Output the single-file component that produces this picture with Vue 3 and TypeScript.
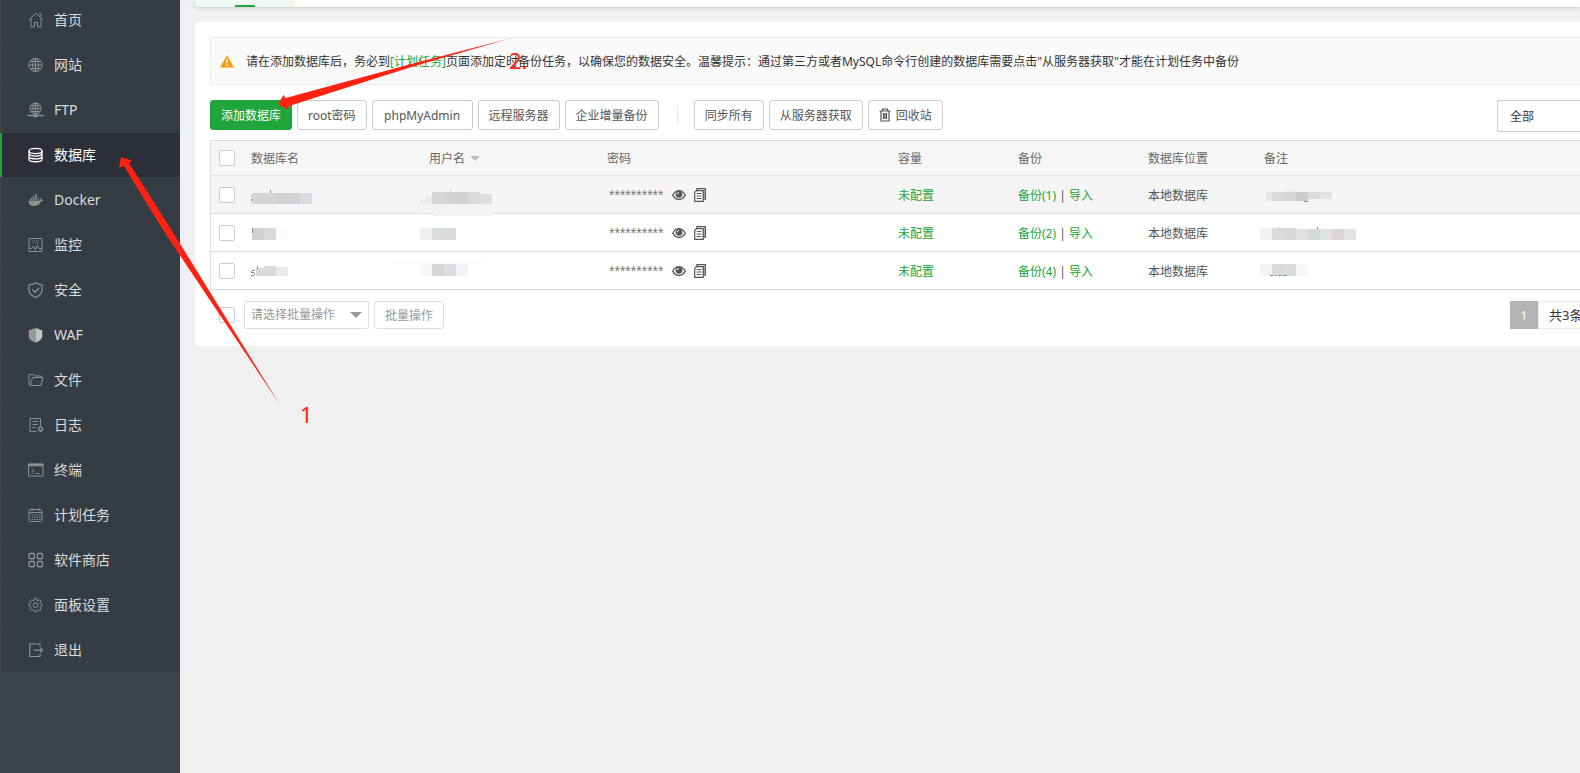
<script setup lang="ts">
import { ref } from 'vue'

interface MenuItem { label: string; icon: string }
interface Block { x: number; y: number; w: number; h: number; c: string }
interface Mosaic { blocks: Block[]; peek?: string }
interface Row { id: number; backups: number; name: Mosaic; user: Mosaic; note: Mosaic }

const menu: MenuItem[] = [
  { label: '首页', icon: '<path d="M.8 8 8 1.2 15.2 8M3 6.5v8.3h3.5v-4.5h3v4.5H13V6.5M11 1.8h2v2.5"/>' },
  { label: '网站', icon: '<circle cx="7.5" cy="8" r="6.6"/><ellipse cx="7.5" cy="8" rx="3" ry="6.6"/><path d="M1 8h13M7.5 1.4v13.2M2 4.5h11M2 11.5h11"/>' },
  { label: 'FTP', icon: '<circle cx="7.5" cy="6.6" r="5.6"/><ellipse cx="7.5" cy="6.6" rx="2.6" ry="5.6"/><path d="M2 6.6h11M7.5 1v11M3 3.8h9M3 9.5h9"/><path d="M-.5 13.5h16M5.5 13.5h4" stroke-width="1.6"/><path d="M5.5 14.2h4" stroke-width="2"/>' },
  { label: '数据库', icon: '<g stroke-width="1.3"><ellipse cx="7.500" cy="4" rx="6.500" ry="2.600"/><path d="M1 4v8.200c0 3.400 13 3.400 13 0V4M1 6.800c1.500 3 11.500 3 13 0M1 9.600c1.500 3 11.500 3 13 0"/></g>' },
  { label: 'Docker', icon: '<path d="M.5 8.500h10.800c1 0 1.200-1.200.7-2.500 1 .3 1.500 1 1.600 1.700.7-.1 1.300.1 1.700.4-.5 1-1.500 1.300-2.500 1.300C11.500 12.800 9 14 6 14 2.500 14 .5 12 .5 8.500z" fill="currentColor" stroke="none"/><path d="M2 7h2M4.500 7h2M7 7h2M9.500 7h1.500M4.500 5h2M7 5h2M7 3h2" stroke-width="1.600"/>' },
  { label: '监控', icon: '<path d="M1 1.500h13v13H1z"/><path d="M4 4h7M4 6h7" stroke-opacity=".5"/><path d="M1.500 11.500l2.500-.5 1.500-2 2 4 2-5 1.500 3.500h3"/>' },
  { label: '安全', icon: '<path d="M7.500.8C5.500 2.200 3.500 2.700 1 2.800v6c0 3.200 3 5 6.500 6.700C11 13.800 14 12 14 8.800v-6c-2.500-.1-4.500-.6-6.500-2zM4.300 7.500l2.700 2.700 4.200-4.400" stroke-width="1.300"/>' },
  { label: 'WAF', icon: '<path d="M7.500.2 6 2 4.500 1.500 3 3 .8 3v6.500c0 2.500 3 4.500 6.700 6.300z" fill="#999" stroke="none"/><path d="M7.500.2 9 2l1.500-.5L12 3l2.200 0v6.500c0 2.500-3 4.500-6.700 6.300z" fill="#c4c4c4" stroke="none"/>' },
  { label: '文件', icon: '<path d="M2.200 13.500H13L15 5.500H4.500L2.200 13.500 1 12.500v-10h4.500L7 4h6v1.500"/>' },
  { label: '日志', icon: '<path d="M8.500 14.500H2v-13h10.500v7M4.500 4.500H10M4.500 7.500H10M4.500 10.500h3"/><circle cx="12.500" cy="12" r="2" stroke-width="1.500"/><path d="M12.500 9v1M12.500 14v1"/>' },
  { label: '终端', icon: '<path d="M.5 2h14.500v12H.5zM3.500 7l2.500 2-2.500 2M7.500 11.500h4"/><path d="M.5 3h14.500" stroke-width="2.500"/>' },
  { label: '计划任务', icon: '<rect x="1" y="2.500" width="13" height="12" rx="1.500"/><path d="M1 5.500h13M4 1v3M11 1v3"/><path d="M3.500 8h9M3.500 10.300h9M3.500 12.500h9" stroke-dasharray="1.500 1"/>' },
  { label: '软件商店', icon: '<g stroke-width="1.400"><rect x="1" y="1.500" width="5.200" height="5.200" rx="1"/><rect x="9.300" y="1.500" width="5.200" height="5.200" rx="1"/><rect x="1" y="9.500" width="5.200" height="5.200" rx="1"/><rect x="9.300" y="9.500" width="5.200" height="5.200" rx="1"/></g>' },
  { label: '面板设置', icon: '<path d="M6.500 1.500h2l.4 1.700 1.200.5 1.500-1 1.400 1.400-1 1.500.5 1.200 1.700.4v2l-1.700.4-.5 1.200 1 1.500-1.400 1.400-1.500-1-1.200.5-.4 1.700h-2l-.4-1.700-1.200-.5-1.500 1L2 12.300l1-1.500-.5-1.200L.8 9.200v-2l1.700-.4.500-1.200-1-1.500 1.400-1.400 1.500 1 1.200-.5z"/><circle cx="7.500" cy="8.200" r="2.300"/>' },
  { label: '退出', icon: '<path d="M12 4.500v-2.500H1.800v12.500H12V12M6 8.200h8.500M12 5.700l2.500 2.500L12 10.700" stroke-width="1.200"/>' },
]
const active = ref('数据库')

function strip(x: number, y: number, h: number, colors: string[]): Block[] {
  return colors.map((c, i) => ({ x: x + i * 12, y, w: 12, h, c }))
}

const rows: Row[] = [
  {
    id: 1, backups: 1,
    name: { blocks: strip(9, 17, 11, ['#d3d4d6', '#d5d4d2', '#cfd0d2', '#d1d2d5', '#dbdce0']), peek: 'M8.500 19.500v1M8.500 22.500v2M27.500 14v3' },
    user: { blocks: [{ x: 2, y: 28, w: 69, h: 6, c: '#f3f3f3' }, { x: 12, y: 34, w: 59, h: 6, c: '#f3f3f3' }, { x: -1, y: 24, w: 8, h: 4, c: '#ececec' }, { x: 5, y: 20, w: 7, h: 8, c: '#ebebeb' }, ...strip(11, 16, 12, ['#d6d6d6', '#d2d4d3', '#d1d1d2', '#d9d9db']), { x: 59, y: 18, w: 12, h: 10, c: '#dfdfe2' }], peek: 'M29 14v1' },
    note: { blocks: [{ x: 10, y: 16, w: 6, h: 9, c: '#e8e8e8' }, { x: 28, y: 13, w: 12, h: 3, c: '#f0f0f0' }, ...strip(16, 16, 9, ['#d9d9d9', '#d6d6d6', '#cfcdcb']), ...strip(52, 16, 7, ['#d9dddd', '#e2e3e5'])], peek: 'M48 25.500h4' },
  },
  {
    id: 2, backups: 2,
    name: { blocks: strip(9, 14, 12, ['#d0d0d2', '#d9dadb', '#fafcfe']), peek: 'M9.500 13.500v5' },
    user: { blocks: strip(-1, 14, 12, ['#efefef', '#d9dddb', '#dadcdc']) },
    note: { blocks: [...strip(4, 14, 12, ['#f2f0f1', '#dbdbdb', '#dad8d6']), ...strip(40, 15, 11, ['#e0e1e2', '#d8d7d9', '#dee2e0', '#d9d6d4', '#e2e3e6'])], peek: 'M22.500 13v1M61.500 13v2' },
  },
  {
    id: 3, backups: 4,
    name: { blocks: [{ x: 13, y: 16, w: 8, h: 8, c: '#d9d9da' }, { x: 21, y: 14, w: 12, h: 10, c: '#dadada' }, { x: 33, y: 15, w: 12, h: 9, c: '#e8e9eb' }], peek: 'M9 18.500h3M8.500 19v1.500M9 20.500h2M11.500 21v2M8 23.500h3M14.500 14v3' },
    user: { blocks: [{ x: -28, y: 7, w: 92, h: 5, c: '#fbfbfb' }, ...strip(-1, 12, 12, ['#f7f5f5', '#d6d6d6', '#dcdddd', '#f2f3f7'])] },
    note: { blocks: strip(4, 12, 12, ['#f4f4f3', '#dadada', '#d8dcda', '#f5f6f9']), peek: 'M14 23.500h3M19 23.500h1M22 23.500h3M27 23.500h4' },
  },
]
const checked = ref<number[]>([])
const scope = ref('all')
const batch = ref('')
</script>

<template>
  <div class="page">
    <nav class="side">
      <ul class="menu">
        <li v-for="m in menu" :key="m.label" :class="{ active: m.label === active }">
          <a href="#" @click.prevent="active = m.label">
            <svg class="mi" viewBox="0 0 16 16" aria-hidden="true" v-html="m.icon"></svg>
            <span>{{ m.label }}</span>
          </a>
        </li>
      </ul>
    </nav>

    <main class="main">
      <div class="tabs"><div class="tab"></div></div>
      <section class="card">
        <div class="notice">
          <svg class="warn" viewBox="0 0 14 13" aria-hidden="true"><path d="M7 .3 14 12.500H0z" fill="#f39c12" /><path d="M7 4.200v4M7 9.500v1.500" stroke="#fff" stroke-width="1.600" /></svg>
          <p>请在添加数据库后，务必到<a href="#">[计划任务]</a>页面添加定时备份任务，以确保您的数据安全。温馨提示：通过第三方或者MySQL命令行创建的数据库需要点击"从服务器获取"才能在计划任务中备份</p>
        </div>

        <div class="toolbar">
          <button class="btn primary">添加数据库</button>
          <button class="btn">root密码</button>
          <button class="btn wide">phpMyAdmin</button>
          <button class="btn">远程服务器</button>
          <button class="btn">企业增量备份</button>
          <span class="split"></span>
          <button class="btn">同步所有</button>
          <button class="btn">从服务器获取</button>
          <button class="btn">
            <svg class="trash" viewBox="0 0 12 14" aria-hidden="true"><path d="M.5 3h11M3.500 3V1h5v2M2 3v10h8V3M4.500 5v6M6 5v6M7.500 5v6" fill="none" stroke="#555" stroke-width="1.200" /></svg>回收站
          </button>
          <select v-model="scope" class="scope" aria-label="数据库位置">
            <option value="all">全部</option>
          </select>
        </div>

        <table class="grid">
          <colgroup><col class="c1"><col class="c2"><col class="c2"><col class="c3"><col class="c4"><col class="c5"><col class="c6"><col></colgroup>
          <thead>
            <tr>
              <th class="tick"><input type="checkbox" aria-label="全选"></th>
              <th>数据库名</th>
              <th>用户名<svg class="sort" viewBox="0 0 10 5" aria-hidden="true"><path d="M0 0h10L5 5z" fill="#bbb" /></svg></th>
              <th>密码</th>
              <th>容量</th>
              <th>备份</th>
              <th>数据库位置</th>
              <th>备注</th>
            </tr>
          </thead>
          <tbody>
            <tr v-for="r in rows" :key="r.id" :class="{ hover: r.id === 1 }">
              <td class="tick"><input v-model="checked" type="checkbox" :value="r.id" aria-label="选择"></td>
              <td v-for="(m, k) in [r.name, r.user]" :key="k" class="masked">
                <svg class="mosaic" viewBox="0 0 110 37" aria-hidden="true">
                  <rect v-for="(b, i) in m.blocks" :key="i" :x="b.x" :y="b.y" :width="b.w" :height="b.h" :fill="b.c" />
                  <path v-if="m.peek" :d="m.peek" fill="none" stroke="#889" />
                </svg>
              </td>
              <td class="tick">
                <div class="pwd">
                  <span>**********</span>
                  <button class="ico" aria-label="显示密码">
                    <svg viewBox="0 0 14 12" width="14" height="12"><path d="M.7 6.200C2.500 3 4.500 1.700 7 1.700s4.500 1.300 6.300 4.500C11.500 9.300 9.500 10.500 7 10.500S2.500 9.300.7 6.200z" fill="none" stroke="#555" stroke-width="1.300" /><circle cx="7" cy="5.300" r="3.400" fill="#555" /><path d="M5.200 5.300A1.800 1.800 0 0 1 7 3.500" stroke="#fff" fill="none" /></svg>
                  </button>
                  <button class="ico copy" aria-label="复制密码">
                    <svg viewBox="0 0 12 14" width="12" height="14"><path d="M3 2.500V.7h8.300v10.500H9.500" fill="none" stroke="#555" stroke-width="1.300" /><path d="M9.500 2.500v9" stroke="#888" stroke-width="2" /><path d="M2.500 2.700h6.700v10.600H.7V4.500z" fill="#fff" stroke="#555" stroke-width="1.200" /><path d="M2.700 5.500h4.600M2.700 8h4.600M2.700 10.500h4.600" stroke="#555" /></svg>
                  </button>
                </div>
              </td>
              <td><a href="#">未配置</a></td>
              <td><a href="#">备份({{ r.backups }})</a> | <a href="#">导入</a></td>
              <td>本地数据库</td>
              <td class="masked">
                <svg class="mosaic" viewBox="0 0 110 37" aria-hidden="true">
                  <rect v-for="(b, i) in r.note.blocks" :key="i" :x="b.x" :y="b.y" :width="b.w" :height="b.h" :fill="b.c" />
                  <path v-if="r.note.peek" :d="r.note.peek" fill="none" stroke="#889" />
                </svg>
              </td>
            </tr>
          </tbody>
        </table>

        <div class="foot">
          <input type="checkbox" aria-label="全选">
          <div class="batch">
            <select v-model="batch" aria-label="批量操作">
              <option value="">请选择批量操作</option>
            </select>
            <svg viewBox="0 0 12 6" aria-hidden="true"><path d="M0 0h12L6 6z" fill="#999" /></svg>
          </div>
          <button class="btn faint">批量操作</button>
          <div class="pager"><span class="cur">1</span><span class="total">共3条</span></div>
        </div>
      </section>
    </main>

    <svg class="marks" aria-hidden="true">
      <path d="M121 157 132 160.500 129 163 171.500 230 280 405 163 230 124 166 119 168z" />
      <path d="M278 104 283.500 95 285.500 98 413 63.500 512 38 413 66.500 289 106 287 109.500z" />
      <text x="509" y="69">2.</text>
      <text x="300" y="423">1</text>
    </svg>
  </div>
</template>

<style>
body { margin: 0; background: #f0f0f0; }
</style>

<style scoped>
.page { position: relative; display: flex; min-height: 100vh; overflow: hidden; font: 12px/18px "Noto Sans", "Noto Sans CJK SC", sans-serif; color: #555; }
.page *, .page *::before { box-sizing: border-box; }
a { color: #20a53a; text-decoration: none; }
button, select, input { font: inherit; margin: 0; }
.side { flex: 0 0 180px; background: #3d434d; }
.menu { list-style: none; margin: -2px 0 0; padding: 0; display: flex; flex-direction: column; gap: 1px; background: #353c43; }
.menu li { height: 44px; border-left: 2px solid #433f3e; }
.menu li.active { background: #2c2f37; border-left-color: #20a53a; }
.menu a { display: flex; align-items: center; gap: 10px; height: 100%; padding-left: 26px; font-size: 14px; line-height: 20px; color: #ddd; }
.menu .active a { color: #fff; }
.mi { width: 16px; height: 16px; color: #8e9092; fill: none; stroke: currentColor; overflow: visible; }
.active .mi { color: #fff; }

.main { flex: 1; min-width: 0; padding-left: 15px; }
.tabs { height: 7px; background: #fff; border-bottom-left-radius: 4px; box-shadow: 0 1px 4px rgba(0, 0, 0, .18); }
.tab { width: 100px; height: 7px; background: #f0f9f2; border-bottom-left-radius: 4px; display: flex; align-items: flex-end; justify-content: center; }
.tab::after { content: ""; width: 20px; height: 2px; background: #20a53a; }
.card { margin-top: 15px; padding: 15px 0 17px 15px; background: #fff; border-radius: 4px 0 0 4px; }
.notice { display: flex; align-items: center; gap: 12px; height: 48px; padding-left: 9px; border: 1px solid #ebebeb; border-right: 0; background: #fafafa; color: #333; border-radius: 2px 0 0 2px; }
.notice p { margin: 0; padding-top: 2px; white-space: nowrap; }
.warn { width: 14px; height: 13px; flex: none; }

.toolbar { display: flex; gap: 5px; align-items: flex-start; margin-top: 15px; height: 40px; }
.btn { display: inline-flex; align-items: center; justify-content: center; height: 30px; padding: 2px 10px 0; border: 1px solid #ccc; border-radius: 3px; background: #fff; color: #555; white-space: nowrap; }
.btn.primary { background: #20a53a; border-color: #20a53a; color: #fff; }
.btn.wide { min-width: 101px; }
.split { width: 1px; height: 16px; margin: 7px 11px 0 13px; background: #e3e3e3; }
.trash { width: 12px; height: 14px; margin: 0 5px 2px 0; }
.scope { appearance: none; width: 83px; height: 32px; margin-left: auto; padding: 2px 12px 0; border: 1px solid #ccc; border-right: 0; border-radius: 2px 0 0 2px; background: #fff; color: #333; }

.grid { width: 100%; table-layout: fixed; border-collapse: separate; border-spacing: 0; border-top: 1px solid #ddd; border-left: 1px solid #ddd; }
.c1 { width: 32px; } .c2 { width: 178px; } .c3 { width: 291px; } .c4 { width: 120px; } .c5 { width: 130px; } .c6 { width: 116px; }
th, td { padding: 2px 8px 0; text-align: left; vertical-align: middle; font-weight: 400; white-space: nowrap; border-bottom: 1px solid #ddd; }
th { height: 35px; background: #f6f6f6; color: #666; border-bottom-color: #e4e4e4; }
td { height: 38px; }
.tick { padding-top: 0; }
.hover td { background: #f5f5f5; }
td.masked { padding: 0; }
.mosaic { display: block; position: relative; width: 110px; height: 37px; overflow: visible; shape-rendering: crispEdges; }
input[type="checkbox"] { appearance: none; display: block; width: 16px; height: 16px; border: 1px solid #ccc; border-radius: 2px; background: #fff; }
.sort { width: 10px; height: 5px; margin-left: 5px; vertical-align: 2px; }
.pwd { display: flex; align-items: center; }
.pwd span { width: 65px; padding-left: 2px; font-family: "Liberation Sans", sans-serif; font-size: 14px; color: #777; }
.ico { display: flex; padding: 0; border: 0; background: none; }
.copy { margin-left: 8px; }

.foot { display: flex; align-items: center; margin-top: 11px; padding-left: 9px; }
.batch { display: flex; align-items: center; width: 125px; height: 28px; margin: 0 5px 0 9px; border: 1px solid #ddd; border-radius: 2px; }
.batch select { appearance: none; flex: 1; min-width: 0; height: 26px; padding: 0 6px; border: 0; background: none; color: #999; }
.batch svg { width: 12px; height: 6px; margin-right: 6px; }
.btn.faint { height: 28px; border-color: #ddd; color: #999; }
.pager { display: flex; margin-left: auto; width: 70px; height: 28px; overflow: hidden; font-size: 13px; line-height: 26px; }
.cur { flex: 0 0 28px; background: #b3b3b3; color: #fff; text-align: center; line-height: 28px; }
.total { flex: none; padding-left: 10px; border: 1px solid #ececec; color: #333; white-space: nowrap; }
.marks { position: absolute; inset: 0; width: 100%; height: 100%; pointer-events: none; fill: #ff2213; font-size: 22px; }
</style>
